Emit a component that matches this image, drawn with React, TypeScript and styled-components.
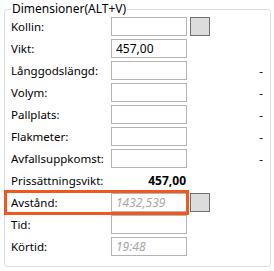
import styled, { createGlobalStyle } from "styled-components";

const GlobalStyle = createGlobalStyle`
  html, body {
    margin: 0;
    padding: 0;
    background: #ffffff;
  }
  body {
    font-family: "Noto Sans", "Open Sans", Arial, sans-serif;
    font-size: 11.5px;
    color: #000000;
  }
`;

interface Row {
  label: string;
  value?: string;
  placeholder?: boolean;
  button?: boolean;
  dash?: boolean;
  highlight?: boolean;
  noInput?: boolean;
}

const rows: Row[] = [
  { label: "Kollin:", button: true },
  { label: "Vikt:", value: "457,00" },
  { label: "Långgodslängd:", dash: true },
  { label: "Volym:", dash: true },
  { label: "Pallplats:", dash: true },
  { label: "Flakmeter:", dash: true },
  { label: "Avfallsuppkomst:", dash: true },
  { label: "Prissättningsvikt:", value: "457,00", noInput: true },
  { label: "Avstånd:", value: "1432,539", placeholder: true, button: true, highlight: true },
  { label: "Tid:" },
  { label: "Körtid:", value: "19:48", placeholder: true },
];

const App = () => {
  return (
    <>
      <GlobalStyle />
      <Page>
        <Group>
          <Legend>Dimensioner(ALT+V)</Legend>
          <Grid>
            {rows.map((row) => (
              <FieldRow key={row.label}>
                <Highlight $on={!!row.highlight}>
                  <Label>{row.label}</Label>
                  {row.noInput ? (
                    <Total>{row.value}</Total>
                  ) : (
                    <Input $placeholder={!!row.placeholder}>{row.value}</Input>
                  )}
                </Highlight>
                <Side>{row.button && <GreyButton />}</Side>
                <Dash>{row.dash ? "-" : ""}</Dash>
              </FieldRow>
            ))}
          </Grid>
        </Group>
      </Page>
    </>
  );
};

export default App;

const Page = styled.div`
  width: 274px;
  height: 271px;
  padding: 2px 4px 0 4px;
  box-sizing: border-box;
`;

const Group = styled.fieldset`
  margin: 0;
  width: 267px;
  height: 265px;
  box-sizing: border-box;
  border: 1px solid #dadfe5;
  border-radius: 3px;
  padding: 0 6px 0 6px;
`;

const Legend = styled.legend`
  padding: 0 1px;
  margin-left: 0;
  font-size: 12px;
  line-height: 14px;
`;

const Grid = styled.div`
  display: flex;
  flex-direction: column;
  gap: 3px;
  padding-top: 1px;
`;

const FieldRow = styled.div`
  display: grid;
  grid-template-columns: 177px 22px 1fr;
  align-items: center;
  height: 19px;
`;

const Highlight = styled.div<{ $on: boolean }>`
  display: grid;
  grid-template-columns: 100px 76px;
  align-items: center;
  height: 19px;
  position: relative;
  ${(p) =>
    p.$on &&
    `
    &::after {
      content: "";
      position: absolute;
      left: -7px;
      right: -1px;
      top: -3px;
      bottom: -3px;
      border: 3px solid #f2571d;
    }
  `}
`;

const Label = styled.span`
  white-space: nowrap;
`;

const Input = styled.div<{ $placeholder: boolean }>`
  height: 19px;
  box-sizing: border-box;
  border: 1px solid #b4b4b4;
  padding: 0 4px;
  line-height: 17px;
  font-size: 12px;
  color: ${(p) => (p.$placeholder ? "#a8a8a8" : "#000000")};
  font-style: ${(p) => (p.$placeholder ? "italic" : "normal")};
`;

const Total = styled.span`
  text-align: right;
  font-weight: bold;
  font-size: 12px;
  padding-right: 1px;
`;

const Side = styled.div`
  display: flex;
  justify-content: flex-end;
`;

const GreyButton = styled.div`
  width: 20px;
  height: 19px;
  box-sizing: border-box;
  background: #dcdcdc;
  border: 1px solid #6f6f6f;
`;

const Dash = styled.span`
  text-align: right;
  padding-right: 1px;
`;
